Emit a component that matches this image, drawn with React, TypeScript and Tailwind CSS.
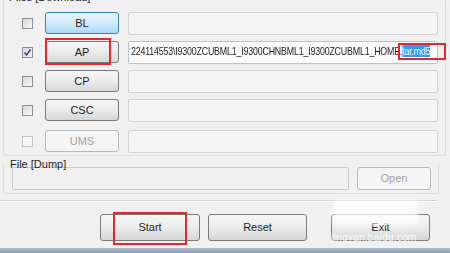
import React from "react";

const font = { fontFamily: '"Liberation Sans", Arial, sans-serif' };

function CheckBox({ checked, disabled }: { checked?: boolean; disabled?: boolean }) {
  return (
    <div
      className={`w-[11px] h-[11px] shrink-0 border flex items-center justify-center ${
        disabled
          ? "border-[#c4c4c4] bg-[#f6f6f6]"
          : "border-[#8e8f8f] bg-gradient-to-br from-[#d8d8d8] to-[#f7f7f7]"
      }`}
    >
      {checked && (
        <svg width="9" height="9" viewBox="0 0 9 9">
          <path d="M1.5 4.5 L3.6 7 L7.6 1.6" fill="none" stroke="#3b4d7a" strokeWidth="1.6" />
        </svg>
      )}
    </div>
  );
}

function WinButton({
  label,
  variant = "normal",
  className = "",
}: {
  label: string;
  variant?: "normal" | "hot" | "disabled";
  className?: string;
}) {
  const styles =
    variant === "hot"
      ? "border-[#3c7fb1] bg-gradient-to-b from-[#e5f4fc] via-[#d4ecf9] to-[#a9d8f3] text-[#1e1e1e]"
      : variant === "disabled"
      ? "border-[#b5b9bc] bg-[#f4f4f4] text-[#a3a3a3]"
      : "border-[#7a7a7a] bg-gradient-to-b from-[#f5f5f5] via-[#ebebeb] to-[#d6d6d6] text-[#1e1e1e]";
  return (
    <div
      className={`shrink-0 border rounded-[3px] flex items-center justify-center text-[11px] ${styles} ${className}`}
    >
      {label}
    </div>
  );
}

function Field({ children, white }: { children?: React.ReactNode; white?: boolean }) {
  return (
    <div
      className={`w-[310px] h-[23px] shrink-0 border rounded-[2px] flex items-center px-[2px] overflow-hidden ${
        white ? "bg-[#fbfbfb] border-[#b9c3cc]" : "bg-[#f4f4f4] border-[#d4d4d4]"
      }`}
    >
      {children}
    </div>
  );
}

const rows = [
  { name: "BL", variant: "hot" as const },
  { name: "AP", checked: true },
  { name: "CP" },
  { name: "CSC" },
  { name: "UMS", variant: "disabled" as const, disabled: true },
];

export default function App() {
  return (
    <div className="relative w-[450px] h-[253px] overflow-hidden bg-[#f0f0f0] text-[#1e1e1e]" style={font}>
      {/* Files [Download] group */}
      <div className="relative ml-[3px] mt-[-2px] w-[443px] h-[158px] border border-[#d5dfe5] rounded-[3px]">
        <span className="absolute left-[4px] top-[-8px] bg-[#f0f0f0] px-[1px] text-[11px] leading-[12px]">
          Files [Download]
        </span>
        <div className="flex flex-col gap-[7px] pt-[13px] pl-[18px]">
          {rows.map((r, i) => (
            <div key={r.name} className={`flex items-center h-[22px] ${i === 4 ? "mt-[2px]" : ""}`}>
              <CheckBox checked={r.checked} disabled={r.disabled} />
              <WinButton label={r.name} variant={r.variant} className="ml-[12px] w-[74px] h-[22px]" />
              <div className="ml-[9px]">
                <Field white={i === 1}>
                  {i === 1 && (
                    <span className="inline-block origin-left scale-x-[0.84] text-[10.5px] whitespace-nowrap tracking-[-0.2px] text-[#222]">
                      224114553\I9300ZCUBML1_I9300CHNBML1_I9300ZCUBML1_HOME.
                      <span className="bg-[#3399ff] text-white">tar.md5</span>
                    </span>
                  )}
                </Field>
              </div>
            </div>
          ))}
        </div>
      </div>

      {/* File [Dump] group */}
      <div className="relative ml-[3px] mt-[8px] w-[436px] h-[30px] border-l border-r border-b border-[#d5dfe5] rounded-b-[3px]">
        <span className="absolute left-[6px] top-[-6px] text-[11px] leading-[12px]">File [Dump]</span>
        <div className="flex items-center gap-[8px] pt-[3px] pl-[8px]">
          <div className="w-[337px] h-[23px] border border-[#c9c9c9] rounded-[2px] bg-[#f0f0f0]" />
          <WinButton label="Open" variant="disabled" className="w-[74px] h-[23px]" />
        </div>
      </div>

      {/* separator */}
      <div className="mt-[6px] w-[437px] h-[2px] border-t border-[#d2d2d2] border-b border-b-white" />

      {/* bottom buttons */}
      <div className="flex items-center pl-[100px] pt-[12px]">
        <WinButton label="Start" className="w-[100px] h-[27px]" />
        <WinButton label="Reset" className="ml-[8px] w-[99px] h-[27px]" />
        <WinButton label="Exit" className="ml-[24px] w-[99px] h-[27px]" />
      </div>

      {/* window frame strip */}
      <div className="absolute left-0 bottom-0 w-full h-[5px] bg-gradient-to-b from-[#aebfcf] to-[#8aa1b6]" />

      {/* red annotation boxes */}
      <div className="absolute left-[45px] top-[38px] w-[66px] h-[27px] border-2 border-[#e0282e]" />
      <div className="absolute left-[398px] top-[43px] w-[48px] h-[17px] border-2 border-[#e0282e]" />
      <div className="absolute left-[113px] top-[212px] w-[74px] h-[33px] border-2 border-[#e0282e]" />

      {/* watermark */}
      <div className="absolute left-[333px] top-[199px] w-[85px] h-[26px] bg-white/70 blur-[2px]" />
      <span className="absolute left-[331px] top-[233px] text-[10px] leading-[10px] text-white/80 tracking-[0.3px]">
        jingyan.baidu.com
      </span>
    </div>
  );
}
